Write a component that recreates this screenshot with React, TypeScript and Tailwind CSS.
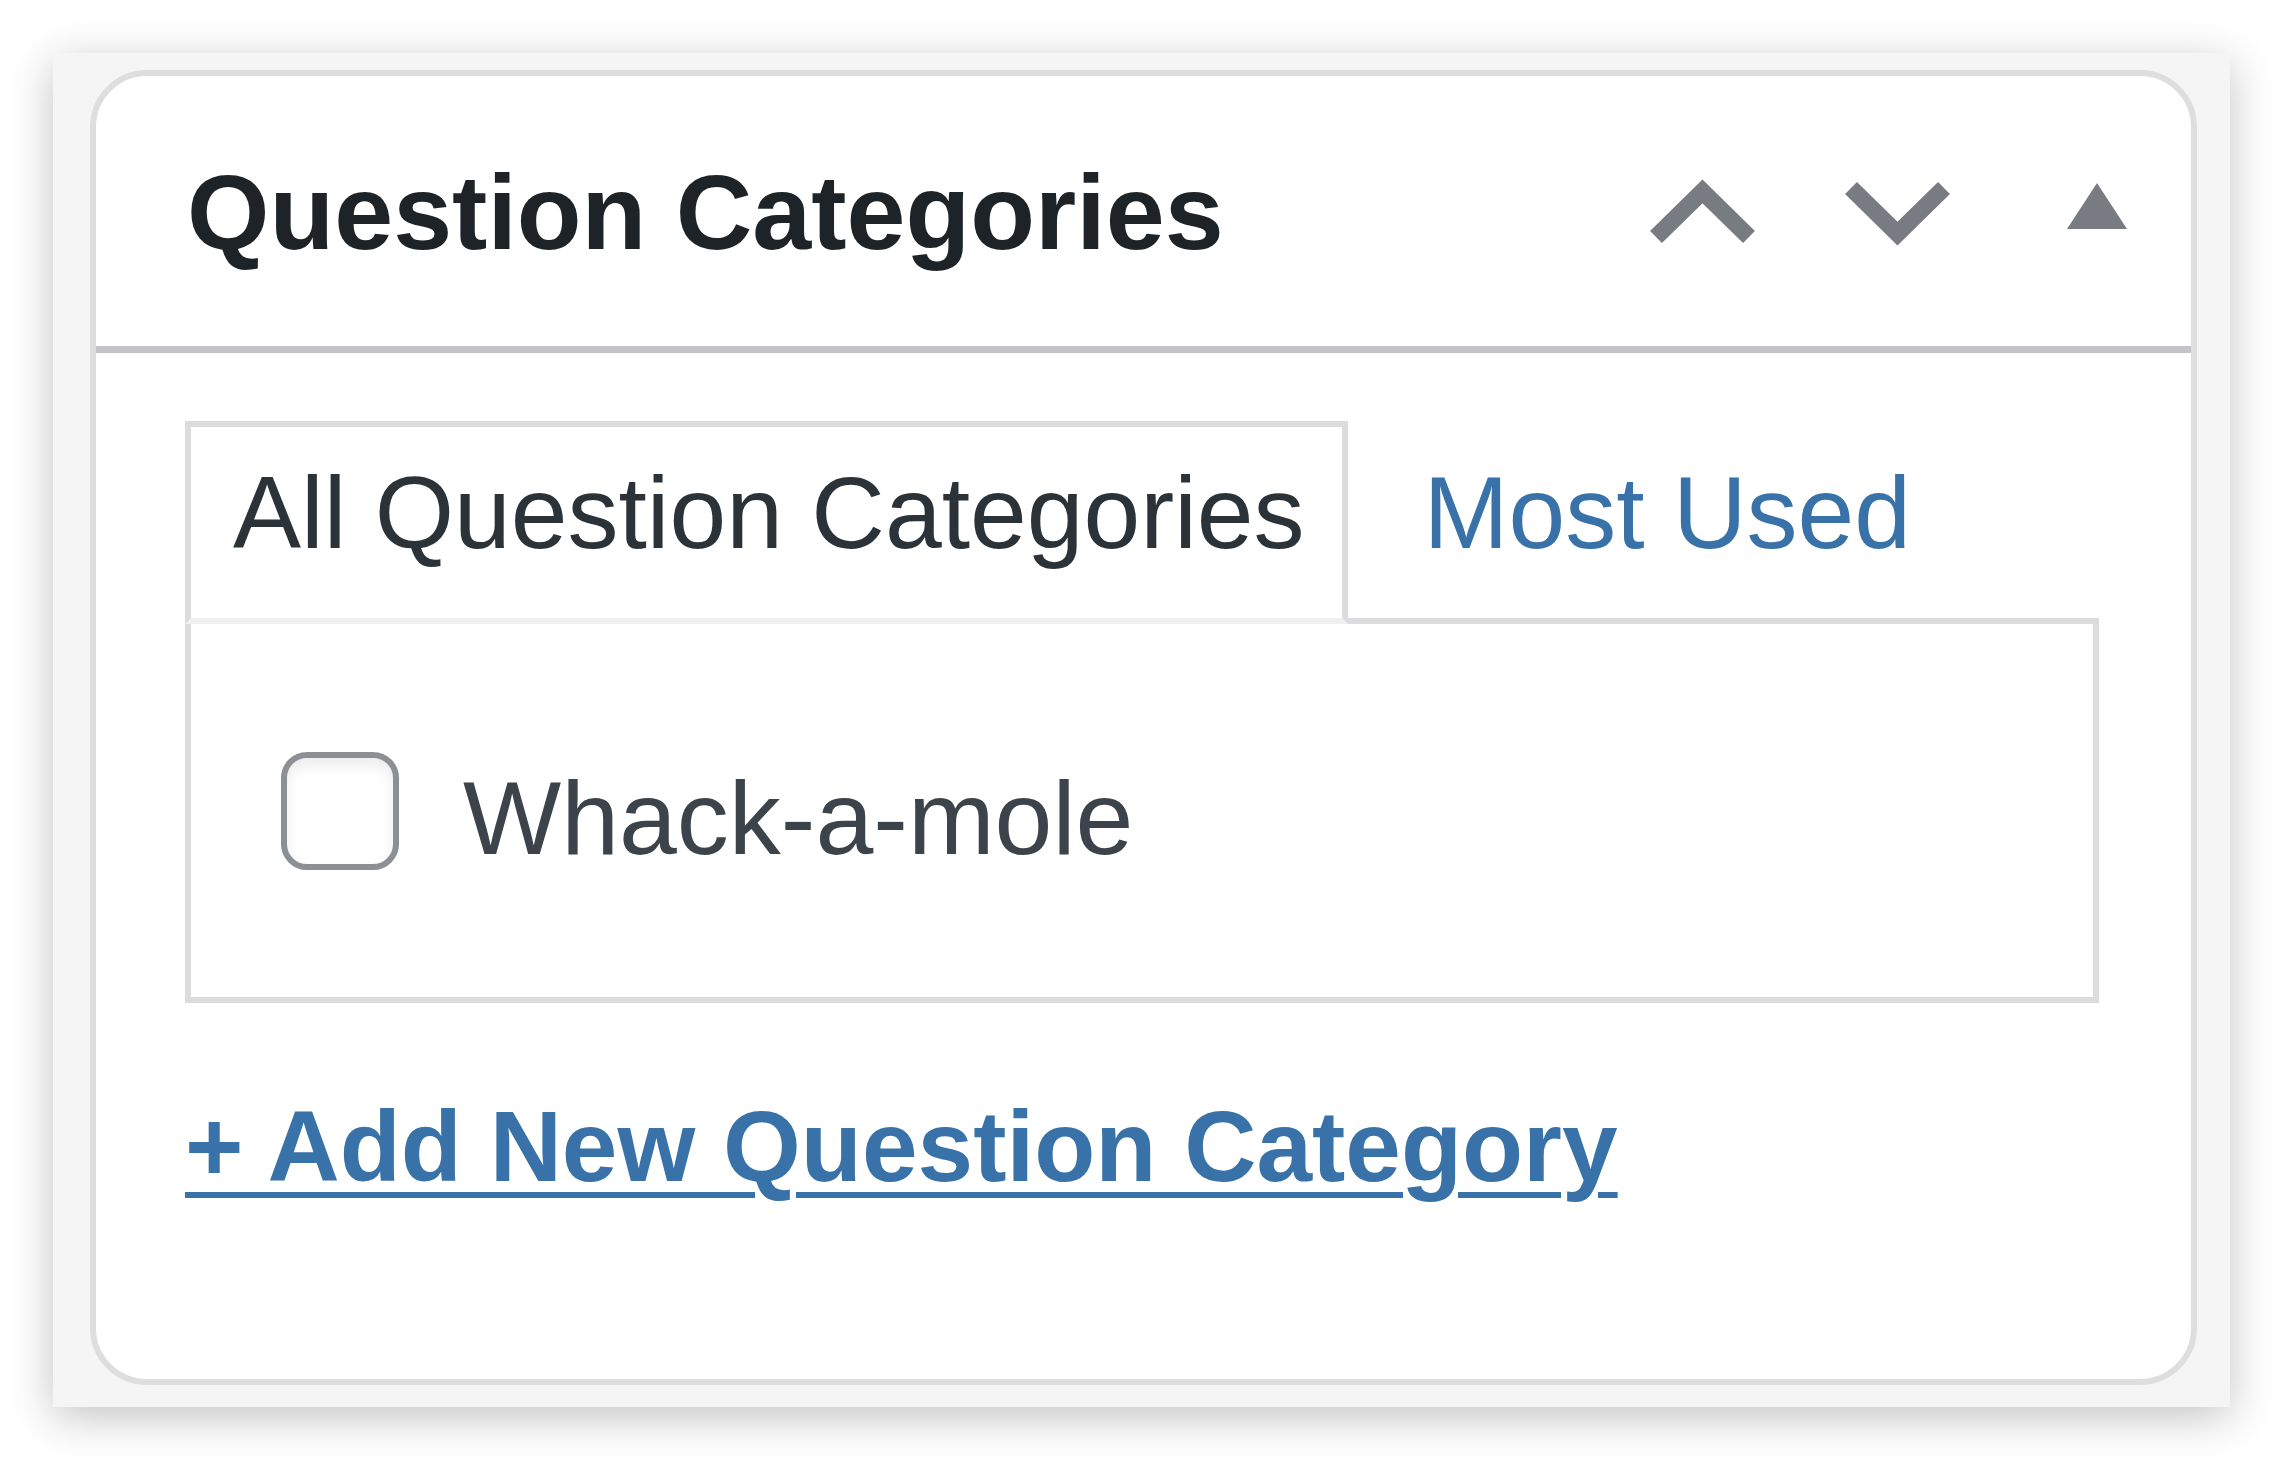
import React from "react";

function ChevronUp() {
  return (
    <svg width="105" height="61" viewBox="0 0 105 61" className="block overflow-visible">
      <polyline
        points="6,55 52.5,9.5 99,55"
        fill="none"
        stroke="#787c82"
        strokeWidth="17"
        strokeLinecap="butt"
        strokeLinejoin="miter"
      />
    </svg>
  );
}

function ChevronDown() {
  return (
    <svg width="105" height="61" viewBox="0 0 105 61" className="block overflow-visible">
      <polyline
        points="6,6 52.5,51.5 99,6"
        fill="none"
        stroke="#787c82"
        strokeWidth="17"
        strokeLinecap="butt"
        strokeLinejoin="miter"
      />
    </svg>
  );
}

function Triangle() {
  return (
    <svg width="60" height="46" viewBox="0 0 60 46" className="block">
      <polygon points="30,0 60,46 0,46" fill="#787c82" />
    </svg>
  );
}

export default function App() {
  return (
    <div
      className="w-[2284px] h-[1460px] bg-white pt-[53px] pl-[53px] overflow-hidden"
      style={{ fontFamily: '"Liberation Sans", Arial, sans-serif' }}
    >
      <div className="w-[2177px] h-[1354px] bg-[#f5f5f5] shadow-[0_10px_42px_rgba(0,0,0,0.24)] pt-[17px] pl-[37px]">
        <div className="w-[2107px] h-[1315px] bg-white border-[6px] border-[#dedede] rounded-[57px] flex flex-col">
          {/* Header */}
          <div className="h-[277px] border-b-[7px] border-[#c3c4c7] flex items-start pl-[91px] pr-[64px]">
            <h2 className="mt-[83px] text-[106px] leading-none font-bold text-[#1d2327] whitespace-nowrap">
              Question Categories
            </h2>
            <div className="ml-auto mt-[106px] flex items-start">
              <ChevronUp />
              <div className="ml-[90px]">
                <ChevronDown />
              </div>
              <div className="ml-[117px] mt-[1px]">
                <Triangle />
              </div>
            </div>
          </div>

          {/* Body */}
          <div className="pl-[89px] pr-[92px] pt-[68px]">
            <div className="flex items-start">
              <div className="relative z-10 -mb-[6px] bg-white border-[6px] border-[#dcdcde] border-b-[#f0f0f1] pl-[42px] pr-[37px] pt-[35px] pb-[54px]">
                <span className="block text-[102px] leading-none text-[#2c3338] whitespace-nowrap">
                  All Question Categories
                </span>
              </div>
              <span className="ml-[76px] mt-[41px] block text-[102px] leading-none text-[#3872a8] whitespace-nowrap">
                Most Used
              </span>
            </div>

            <div className="h-[385px] border-[6px] border-[#dcdcde] flex items-center pl-[90px]">
              <div className="w-[118px] h-[118px] border-[6px] border-[#8c8f94] rounded-[26px] bg-white shadow-[inset_0_7px_14px_rgba(0,0,0,0.08)]" />
              <span className="ml-[64px] mt-[14px] text-[104px] leading-none text-[#3c434a] whitespace-nowrap">
                Whack-a-mole
              </span>
            </div>

            <div className="mt-[93px]">
              <a
                href="#"
                className="inline-block text-[100px] leading-none font-bold text-[#3872a8] underline decoration-[6px] underline-offset-[11px] whitespace-nowrap"
              >
                + Add New Question Category
              </a>
            </div>
          </div>
        </div>
      </div>
    </div>
  );
}
